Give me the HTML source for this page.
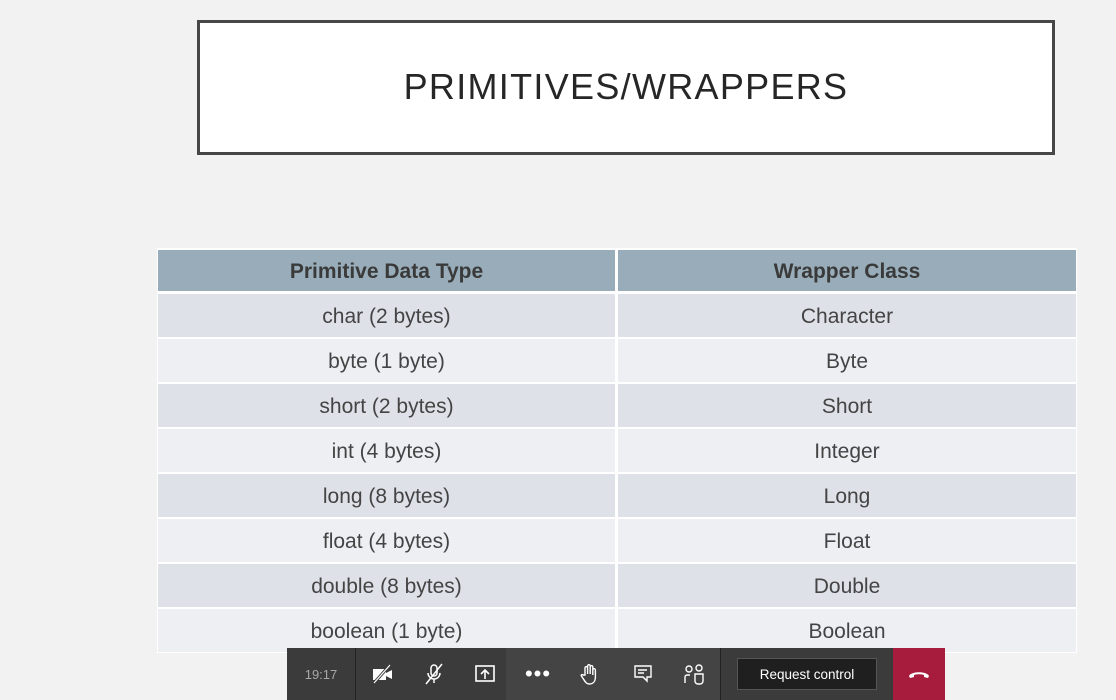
<!DOCTYPE html>
<html><head><style>
body{margin:0;width:1116px;height:692px;background:#f2f2f2;position:relative;overflow:hidden;font-family:"Liberation Sans",sans-serif}
.title{position:absolute;left:197px;top:20px;width:852px;height:129px;border:3px solid #474747;background:#fff}
.title span{position:absolute;left:0;right:0;top:64px;text-align:center;font-size:36px;letter-spacing:1.3px;color:#262626;line-height:1;transform:translateY(-50%)}
.tbl{position:absolute;left:157px;top:248px;width:920px;height:405px;background:#fff}
.c{position:absolute;display:flex;align-items:center;justify-content:center;color:#444;font-size:21px;padding-top:3px;box-sizing:border-box}
.h{background:#98adb9;font-weight:bold;color:#3a3a3a;font-size:21px}
.bar{position:absolute;left:287px;top:648px;width:658px;height:52px;background:#3b3b3b}
.ic{position:absolute;top:0;height:52px;display:flex;align-items:center;justify-content:center}
</style></head><body>
<div class="title"><span>PRIMITIVES/WRAPPERS</span></div>
<div class="tbl">
<div class="c h" style="left:1px;top:2px;width:457px;height:41px">Primitive Data Type</div>
<div class="c h" style="left:461px;top:2px;width:458px;height:41px">Wrapper Class</div>
</div>
<div id="rows"></div>
<script>
var L=[["char (2 bytes)","Character"],["byte (1 byte)","Byte"],["short (2 bytes)","Short"],["int (4 bytes)","Integer"],["long (8 bytes)","Long"],["float (4 bytes)","Float"],["double (8 bytes)","Double"],["boolean (1 byte)","Boolean"]];
var h="";L.forEach(function(r,i){var y=294+i*45,bg=i%2?"#eeeff3":"#dfe1e8";
h+='<div class="c" style="left:158px;top:'+y+'px;width:457px;height:43px;background:'+bg+'">'+r[0]+'</div>';
h+='<div class="c" style="left:618px;top:'+y+'px;width:458px;height:43px;background:'+bg+'">'+r[1]+'</div>';});
document.getElementById("rows").innerHTML=h;
</script>
<div class="bar">
<div class="ic" style="left:0;width:68px;color:#a8a8a8;font-size:13px">19:17</div>
<div style="position:absolute;left:68px;top:0;width:1px;height:52px;background:#222"></div>
<div style="position:absolute;left:219px;top:0;width:215px;height:52px;background:#444"></div>
<div style="position:absolute;left:433px;top:0;width:1px;height:52px;background:#222"></div>
<div class="ic" style="left:80px;width:32px"><svg width="24" height="20" viewBox="0 0 24 20"><rect x="2" y="5" width="13" height="11" fill="#fff"/><path d="M15 9l6-3v9l-6-3z" fill="#fff"/><path d="M3 19L19 1" stroke="#3b3b3b" stroke-width="3"/><path d="M3 19L19 1" stroke="#fff" stroke-width="1.2"/></svg></div>
<div class="ic" style="left:131px;width:32px"><svg width="22" height="22" viewBox="0 0 22 22" fill="none" stroke="#fff" stroke-width="1.5"><rect x="8" y="2" width="6" height="11" rx="3"/><path d="M5 10a6 6 0 0012 0M11 16v4M3 21L19 1"/></svg></div>
<div class="ic" style="left:182px;width:32px"><svg width="22" height="20" viewBox="0 0 22 20" fill="none" stroke="#fff" stroke-width="1.6"><rect x="2" y="2" width="18" height="15"/><path d="M11 15V6M7 10l4-4 4 4"/></svg></div>
<div class="ic" style="left:235px;width:32px;color:#fff;font-size:22px;letter-spacing:1px">•••</div>
<div class="ic" style="left:287px;width:32px"><svg width="20" height="22" viewBox="0 0 20 22" fill="none" stroke="#fff" stroke-width="1.4"><path d="M5 12V5a1.3 1.3 0 012.6 0V11V3a1.3 1.3 0 012.6 0v8V4a1.3 1.3 0 012.6 0v8V7a1.3 1.3 0 012.6 0v7c0 4-2 7-6 7-3 0-4-2-6-5l-2-3c-.6-1 .6-2 1.6-1z"/></svg></div>
<div class="ic" style="left:340px;width:32px"><svg width="20" height="20" viewBox="0 0 20 20" fill="none" stroke="#fff" stroke-width="1.4"><path d="M2 2h16v11h-4v4l-4-4H2z"/><path d="M5 6h9M5 9h6"/></svg></div>
<div class="ic" style="left:391px;width:32px"><svg width="22" height="22" viewBox="0 0 22 22" fill="none" stroke="#fff" stroke-width="1.4"><circle cx="6" cy="6" r="3"/><circle cx="16" cy="5" r="3"/><path d="M2 20v-6a2 2 0 012-2h3M12 11h8v7a3 3 0 01-3 3h-2a3 3 0 01-3-3z"/></svg></div>
<div class="ic" style="left:450px;top:10px;height:32px;width:140px;background:#1f1f1f;border:1px solid #555;color:#fff;font-size:13.5px;box-sizing:border-box">Request control</div>
<div class="ic" style="left:606px;width:52px;background:#a71c3d"><svg width="22" height="10" viewBox="0 0 22 10"><path d="M1 7c2-5 18-5 20 0l-1 2-4-1v-2c-3-1-7-1-10 0v2l-4 1z" fill="#fff"/></svg></div>
</div>
</body></html>
